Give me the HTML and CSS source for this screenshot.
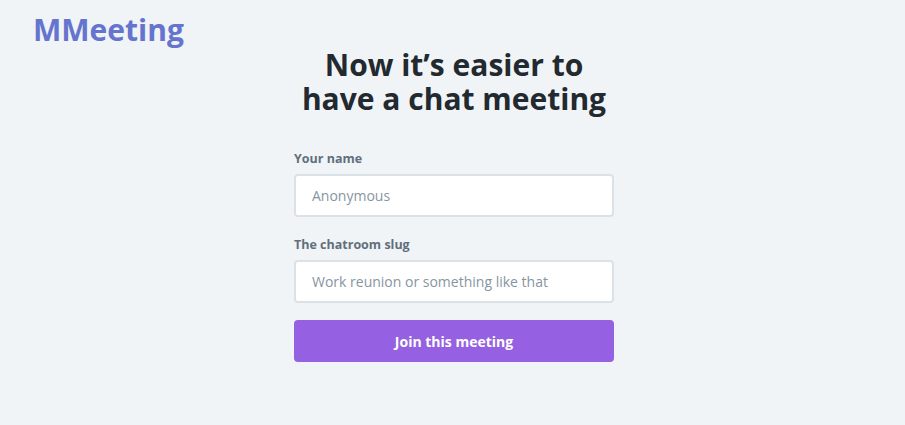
FILE: index.html
```html
<!DOCTYPE html>
<html>
<head>
<meta charset="utf-8">
<link rel="stylesheet" href="styles.css">
</head>
<body>
<header class="topbar">
  <div class="logo">MMeeting</div>
</header>
<main class="main">
  <h1 class="title">Now it’s easier to<br>have a chat meeting</h1>
  <form class="form">
    <label class="field">
      <span class="label">Your name</span>
      <input class="input" type="text" placeholder="Anonymous">
    </label>
    <label class="field field-last">
      <span class="label">The chatroom slug</span>
      <input class="input" type="text" placeholder="Work reunion or something like that">
    </label>
    <button class="btn" type="button">Join this meeting</button>
  </form>
</main>
</body>
</html>
```
FILE: styles.css
```css
* { box-sizing: border-box; }
html, body { margin: 0; padding: 0; }
body {
  background: #f0f4f7;
  font-family: "Open Sans", "Noto Sans", sans-serif;
  width: 905px;
  height: 425px;
  overflow: hidden;
}
.topbar {
  padding: 10px 0 0 33px;
  height: 48px;
}
.logo {
  color: #6574cd;
  font-size: 30px;
  font-weight: 700;
  line-height: 40px;
}
.main {
  display: flex;
  flex-direction: column;
  align-items: center;
  padding-left: 3px;
}
.title {
  margin: 0;
  color: #22292f;
  font-size: 30px;
  font-weight: 700;
  line-height: 34px;
  text-align: center;
}
.form {
  width: 320px;
  margin-top: 35px;
  display: flex;
  flex-direction: column;
}
.field {
  display: flex;
  flex-direction: column;
  margin-bottom: 20px;
}
.field-last { margin-bottom: 17px; }
.label {
  color: #606f7b;
  font-size: 12.5px;
  font-weight: 700;
  line-height: 16px;
  margin-bottom: 7px;
}
.input {
  height: 43px;
  border: 2px solid #dae1e7;
  border-radius: 4px;
  background: #fff;
  padding: 0 16px;
  font-family: inherit;
  font-size: 14px;
  color: #22292f;
}
.input::placeholder { color: #8795a1; opacity: 1; }
.btn {
  height: 42px;
  border: none;
  border-radius: 4px;
  background: #9561e2;
  color: #fff;
  font-family: inherit;
  font-size: 14px;
  font-weight: 700;
}
```
